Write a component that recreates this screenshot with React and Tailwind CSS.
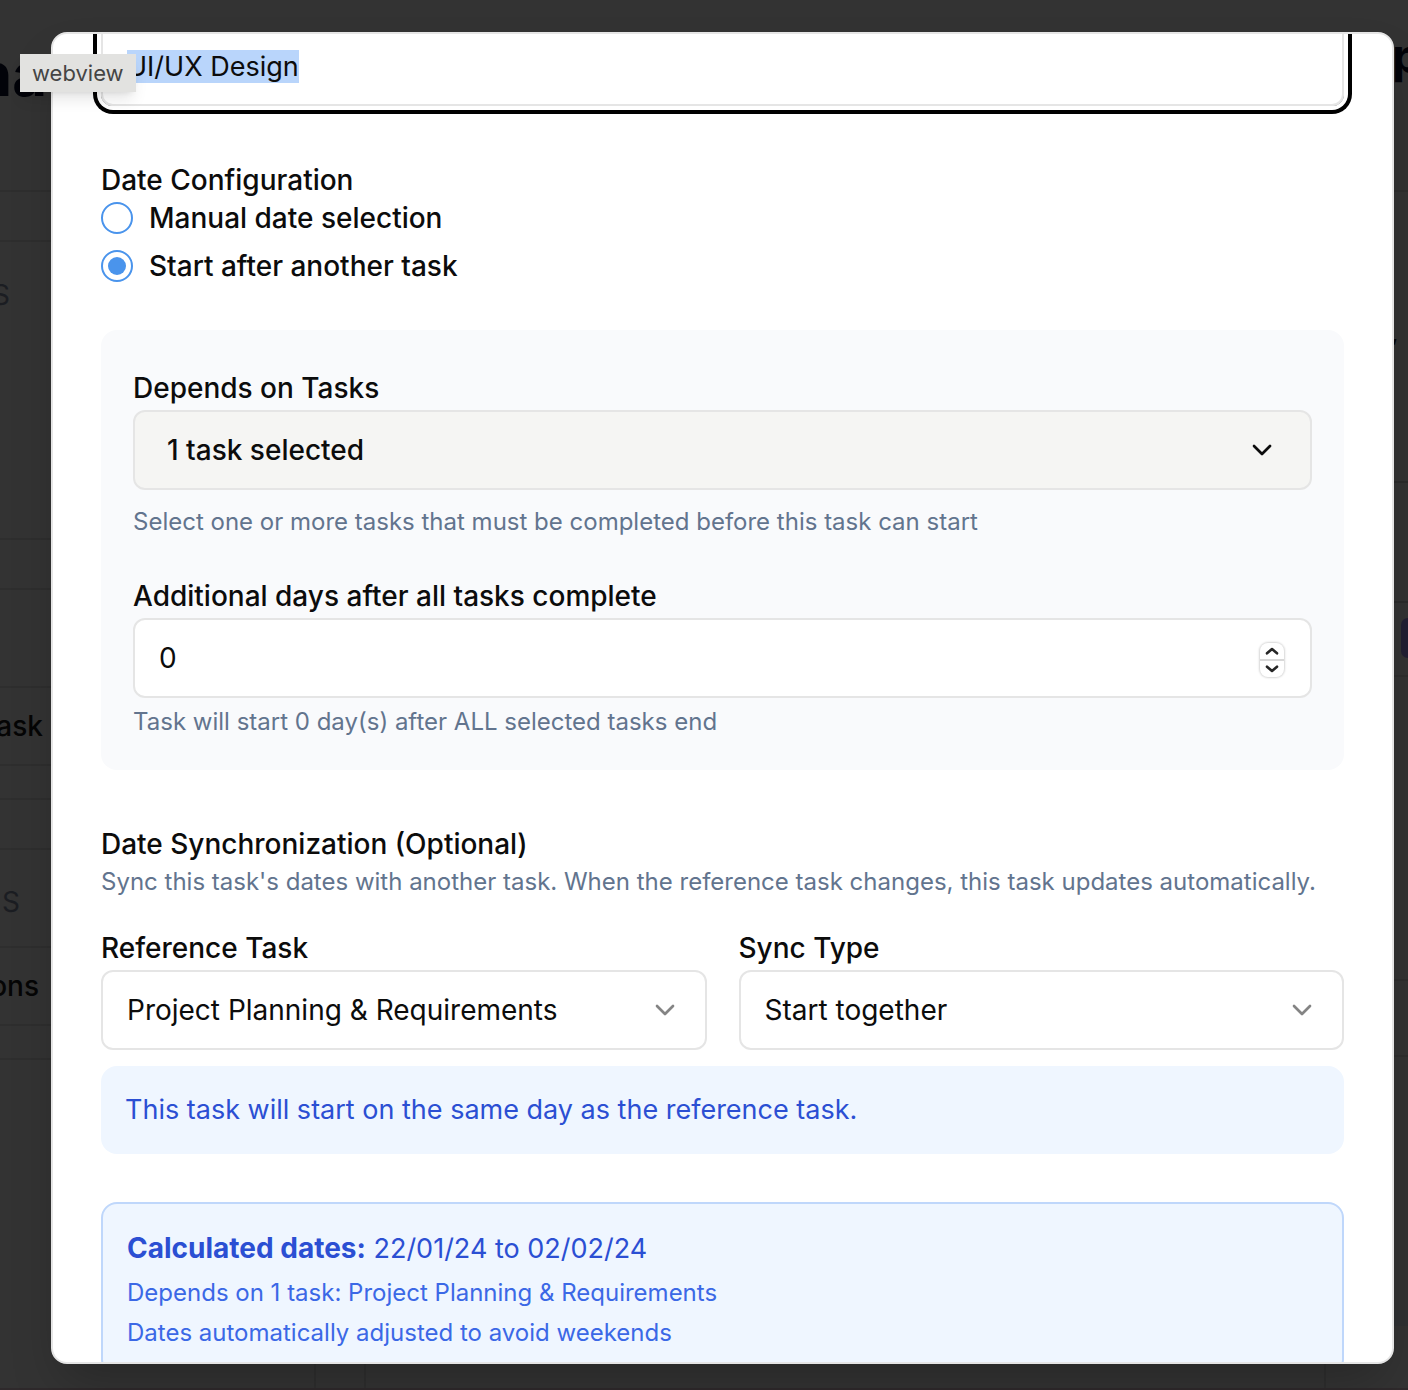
import { useEffect, useRef, useState } from "react";
import { ChevronDown } from "lucide-react";

const labelClass = "mb-2 block text-[28px] leading-7 font-medium";
const hintClass = "text-2xl leading-8 text-slate-500";
const boxClass = "w-full rounded-xl border-2 border-[#e5e5e5]";
const fieldClass = `${boxClass} h-20 text-[28px]`;

function Backdrop() {
  return (
    <div aria-hidden="true" className="absolute inset-0 flex flex-col justify-between overflow-hidden border-b-2 border-[#2e292b] bg-[#333333] text-[28px] font-medium text-[#050505]">
      <div className="flex flex-1 justify-between">
        <div className="w-[51px]">
          <div className="flex h-48 justify-end overflow-hidden border-b-2 border-[#2e2e2e] pt-11 pr-1 text-6xl font-bold text-[#020309]">
            <span>na</span>
          </div>
          <div className="h-[50px] border-b-2 border-[#2e2e2e]" />
          <div className="flex h-[298px] justify-start overflow-hidden border-b-2 border-[#2e2e2e] pt-8 font-normal text-[#1b1d22]">
            <span className="-ml-2">S</span>
          </div>
          <div className="h-[50px] border-b-2 border-[#2e2e2e]" />
          <div className="h-[98px] border-b-2 border-[#2e2e2e]" />
          <div className="flex h-[78px] items-center justify-end border-b-2 border-[#2e2e2e] pr-2">ask</div>
          <div className="h-[34px] border-b-2 border-[#2e2e2e]" />
          <div className="h-[50px] border-b-2 border-[#2e2e2e]" />
          <div className="flex h-[98px] items-center border-b-2 border-[#2e2e2e] pt-2 pl-0.5 font-normal text-[#1b1d22]">
            <span>S</span>
          </div>
          <div className="flex h-[78px] items-center justify-end border-b-2 border-[#2e2e2e] pr-3">ons</div>
          <div className="h-[34px] border-b-2 border-[#2e2e2e]" />
        </div>
        <div className="w-4">
          <div className="h-48 overflow-hidden border-b-2 border-[#2e2e2e] pt-8 text-5xl font-bold text-[#020309]">p</div>
          <div className="h-[291px] border-b-2 border-[#2b2b2b] pt-32 text-xl">,</div>
          <div className="h-[120px] border-b-2 border-[#2b2b2b]" />
          <div className="h-[74px] border-b-2 border-[#2e2e2e] pt-[15px] pl-[9px]">
            <div className="h-10 rounded-l-lg bg-[#221f33]" />
          </div>
          <div className="h-[304px] border-b-2 border-[#2e2e2e]" />
          <div className="h-[76px] border-b-2 border-[#2e2e2e]" />
          <div className="mt-[253px] h-4 bg-[#2f3133]" />
        </div>
      </div>
      <div className="flex h-8 justify-between">
        <div className="w-[316px] border-r-2 border-[#2e2e2e]" />
        <div className="mr-[82px] ml-12 flex-1 border-x-2 border-[#2e2e2e]" />
      </div>
    </div>
  );
}

function RadioOption({ value, label, checked, onChange }) {
  return (
    <label className="flex items-center gap-4 text-[28px] leading-8 font-medium">
      <input
        type="radio"
        name="date-mode"
        value={value}
        checked={checked}
        onChange={() => onChange(value)}
        className="grid size-8 appearance-none place-items-center rounded-full border-2 border-[#4a94ec] before:size-[18px] before:rounded-full checked:before:bg-[#4a94ec]"
      />
      {label}
    </label>
  );
}

function SelectField({ id, label, options }) {
  return (
    <div>
      <label htmlFor={id} className={labelClass}>{label}</label>
      <div className="relative">
        <select id={id} className={`${fieldClass} appearance-none bg-white pr-18 pl-6`}>
          {options.map((option) => <option key={option}>{option}</option>)}
        </select>
        <ChevronDown className="pointer-events-none absolute top-6 right-[26px] size-8 opacity-50" />
      </div>
    </div>
  );
}

function Stepper({ onStep }) {
  return (
    <div className="absolute top-[25px] right-7 flex h-[34px] w-6 flex-col overflow-hidden rounded-lg bg-white shadow-[0_0_2px_1px_rgba(0,0,0,0.16)]">
      <button type="button" aria-label="Increase days" onClick={() => onStep(1)} className="grid flex-1 place-items-center border-b-2 border-[#d8d8d8]">
        <svg viewBox="0 0 14 8" className="h-2 w-3.5" fill="none" stroke="#262626" strokeWidth="2.6" strokeLinecap="round" strokeLinejoin="round"><path d="M2 6.300 7 2l5 4.300" /></svg>
      </button>
      <button type="button" aria-label="Decrease days" onClick={() => onStep(-1)} className="grid flex-1 place-items-center">
        <svg viewBox="0 0 14 8" className="h-2 w-3.5" fill="none" stroke="#262626" strokeWidth="2.6" strokeLinecap="round" strokeLinejoin="round"><path d="M2 1.700 7 6l5-4.300" /></svg>
      </button>
    </div>
  );
}

export default function App() {
  const [mode, setMode] = useState("after");
  const [days, setDays] = useState(0);
  const nameRef = useRef(null);

  useEffect(() => {
    nameRef.current.focus({ preventScroll: true });
    nameRef.current.select();
  }, []);

  return (
    <div className="relative h-screen overflow-hidden font-[Inter,sans-serif] text-[#0c0c0c]">
      <Backdrop />
      <div className="relative h-full pt-8 pr-3.5 pb-[26px] pl-[51px]">
        <div role="dialog" aria-label="Edit task" className="h-full overflow-hidden rounded-2xl border-2 border-[#e5e5e5] bg-white px-12 shadow-2xl">
          <input
            ref={nameRef}
            aria-label="Task name"
            defaultValue="UI/UX Design"
            className={`${boxClass} -mt-3 block h-21 px-6 pt-1 text-[27px] ring-4 ring-black ring-offset-4 outline-none selection:bg-[#b9d5fb] selection:text-[#0c0c0c]`}
          />

          <fieldset className="mt-15">
            <legend className={labelClass}>Date Configuration</legend>
            <div className="flex flex-col gap-4">
              <RadioOption value="manual" label="Manual date selection" checked={mode === "manual"} onChange={setMode} />
              <RadioOption value="after" label="Start after another task" checked={mode === "after"} onChange={setMode} />
            </div>
          </fieldset>

          <section className="mt-12 rounded-2xl bg-[#f9fafc] px-8 pt-11 pb-8">
            <label htmlFor="depends" className={labelClass}>Depends on Tasks</label>
            <button id="depends" type="button" className={`${fieldClass} flex items-center justify-between bg-[#f5f5f3] px-8 font-medium`}>
              1 task selected
              <ChevronDown className="size-8" />
            </button>
            <p className={`${hintClass} mt-4`}>Select one or more tasks that must be completed before this task can start</p>

            <label htmlFor="days" className={`${labelClass} mt-11`}>Additional days after all tasks complete</label>
            <div className="relative">
              <input
                id="days"
                type="number"
                value={days}
                onChange={(event) => setDays(Number(event.target.value))}
                className={`${fieldClass} block bg-white px-6 [appearance:textfield]`}
              />
              <Stepper onStep={(step) => setDays(Math.max(0, days + step))} />
            </div>
            <p className={`${hintClass} mt-2`}>Task will start {days} day(s) after ALL selected tasks end</p>
          </section>

          <section className="mt-15">
            <h3 className={labelClass}>Date Synchronization (Optional)</h3>
            <p className={hintClass}>Sync this task's dates with another task. When the reference task changes, this task updates automatically.</p>
            <div className="mt-9 grid grid-cols-2 gap-8">
              <SelectField id="reference" label="Reference Task" options={["Project Planning & Requirements"]} />
              <SelectField id="sync-type" label="Sync Type" options={["Start together", "End together"]} />
            </div>
            <p className="mt-4 rounded-2xl bg-[#eff6ff] p-6 text-[27px] leading-10 text-[#2b4fd3]">This task will start on the same day as the reference task.</p>
          </section>

          <section className="mt-12 rounded-2xl border-2 border-[#bfd7fb] bg-[#eff6ff] p-6 text-[#2b4fd3]">
            <p className="text-[27px] leading-10"><strong className="text-[28px] font-bold">Calculated dates:</strong> 22/01/24 to 02/02/24</p>
            <p className="mt-2 text-2xl leading-8 text-[#3b68e6]">Depends on 1 task: Project Planning &amp; Requirements</p>
            <p className="mt-2 text-2xl leading-8 text-[#3b68e6]">Dates automatically adjusted to avoid weekends</p>
          </section>
        </div>
      </div>
      <div role="tooltip" className="absolute top-[54px] left-5 bg-[#e2e2e0] px-3 py-[5px] text-[22px] leading-7 text-[#454545] shadow-lg">webview</div>
    </div>
  );
}
